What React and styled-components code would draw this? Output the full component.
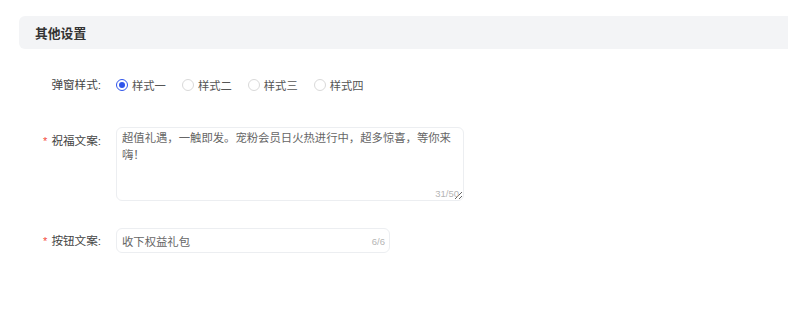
import React from "react";
import styled, { createGlobalStyle } from "styled-components";

const Global = createGlobalStyle`
  html, body { margin: 0; padding: 0; background: #fff; }
  body { font-family: "Liberation Sans", "Noto Sans CJK SC", sans-serif; color: #333; }
  * { box-sizing: border-box; }
`;

const Page = styled.div`
  padding: 16px 0 0 19px;
  width: 788px;
`;

const SectionHeader = styled.div`
  height: 33px;
  background: #f3f4f6;
  border-radius: 6px 0 0 6px;
  display: flex;
  align-items: center;
  padding-left: 16px;
  font-size: 12.8px;
  font-weight: 700;
  color: #333;
`;

const Form = styled.div`
  display: flex;
  flex-direction: column;
  padding-top: 24px;
`;

const Row = styled.div`
  display: grid;
  grid-template-columns: 85px 1fr;
  column-gap: 12px;
  align-items: ${(p) => (p.$top ? "start" : "center")};
  margin-bottom: ${(p) => p.$mb || 0}px;
`;

const Label = styled.div`
  text-align: right;
  font-size: 11.6px;
  color: #444;
  line-height: 24px;
  padding-top: ${(p) => p.$pt || 0}px;
  padding-right: 3px;
  white-space: nowrap;
`;

const Star = styled.span`
  color: #f5483b;
  margin-right: 4px;
  font-size: 11px;
`;

const RadioGroup = styled.div`
  display: flex;
  align-items: center;
  height: 24px;
  gap: 16px;
`;

const RadioItem = styled.label`
  display: flex;
  align-items: center;
  gap: 4px;
  font-size: 11.3px;
  color: #555;
  cursor: pointer;
`;

const RadioCircle = styled.span`
  width: 12px;
  height: 12px;
  border-radius: 50%;
  border: 1px solid ${(p) => (p.$on ? "#2f54eb" : "#d9d9d9")};
  background: #fff;
  display: inline-flex;
  align-items: center;
  justify-content: center;
  &::after {
    content: "";
    width: 6px;
    height: 6px;
    border-radius: 50%;
    background: #2f54eb;
    display: ${(p) => (p.$on ? "block" : "none")};
  }
`;

const FieldWrap = styled.div`
  position: relative;
  width: ${(p) => p.$w}px;
`;

const TextArea = styled.textarea`
  display: block;
  width: 100%;
  height: 74px;
  border: 1px solid #eceef1;
  border-radius: 6px;
  padding: 2px 6px 0 5px;
  font-family: "Liberation Sans", "Noto Sans CJK SC", sans-serif;
  font-size: 11.35px;
  line-height: 16.5px;
  color: #666;
  outline: none;
  resize: both;
`;

const Input = styled.input`
  display: block;
  width: 100%;
  height: 25px;
  border: 1px solid #eceef1;
  border-radius: 6px;
  padding: 0 30px 0 5px;
  font-family: "Liberation Sans", "Noto Sans CJK SC", sans-serif;
  font-size: 11.35px;
  color: #666;
  outline: none;
`;

const Counter = styled.span`
  position: absolute;
  right: ${(p) => p.$r}px;
  bottom: ${(p) => p.$b}px;
  font-size: 9.5px;
  color: #b5b5b5;
  pointer-events: none;
`;

const styles = ["样式一", "样式二", "样式三", "样式四"];

export default function App() {
  const [sel, setSel] = React.useState(0);
  const [text, setText] = React.useState(
    "超值礼遇，一触即发。宠粉会员日火热进行中，超多惊喜，等你来嗨！"
  );
  const [btn, setBtn] = React.useState("收下权益礼包");
  return (
    <>
      <Global />
      <Page>
        <SectionHeader>其他设置</SectionHeader>
        <Form>
          <Row $mb={30}>
            <Label>弹窗样式:</Label>
            <RadioGroup>
              {styles.map((s, i) => (
                <RadioItem key={s} onClick={() => setSel(i)}>
                  <RadioCircle $on={sel === i} />
                  {s}
                </RadioItem>
              ))}
            </RadioGroup>
          </Row>
          <Row $top $mb={27}>
            <Label $pt={2}>
              <Star>*</Star>祝福文案:
            </Label>
            <FieldWrap $w={348}>
              <TextArea
                value={text}
                maxLength={50}
                onChange={(e) => setText(e.target.value)}
              />
              <Counter $r={5} $b={2}>{text.length}/50</Counter>
            </FieldWrap>
          </Row>
          <Row>
            <Label>
              <Star>*</Star>按钮文案:
            </Label>
            <FieldWrap $w={274}>
              <Input
                value={btn}
                maxLength={6}
                onChange={(e) => setBtn(e.target.value)}
              />
              <Counter $r={5} $b={6}>{btn.length}/6</Counter>
            </FieldWrap>
          </Row>
        </Form>
      </Page>
    </>
  );
}
